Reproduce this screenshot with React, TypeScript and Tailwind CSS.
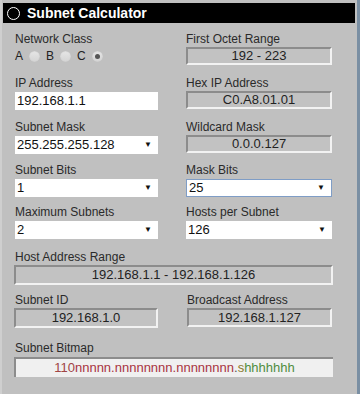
const font = { fontFamily: '"Liberation Sans", Arial, sans-serif' };

const Label: React.FC<{ text: string }> = ({ text }) => (
  <div className="text-[12px] leading-[14px] text-[#2a2a2a]">{text}</div>
);

const Output: React.FC<{ value: string; className?: string }> = ({ value, className = "" }) => (
  <div
    className={`mt-[1px] flex h-[18px] items-center justify-center border-2 border-t-[#8c8c8c] border-l-[#8c8c8c] border-r-[#f2f2f2] border-b-[#f2f2f2] bg-[#c2c2c2] text-[13px] text-[#222] ${className}`}
  >
    {value}
  </div>
);

const Select: React.FC<{ value: string; focused?: boolean }> = ({ value, focused }) => (
  <div
    className={`mt-[2px] flex h-[18px] items-center justify-between bg-white pl-[2px] pr-[6px] text-[13px] text-[#111] ${
      focused ? "border border-[#7f9dc6]" : ""
    }`}
  >
    <span>{value}</span>
    <span className="text-[8px] leading-none text-[#111]">▼</span>
  </div>
);

const Radio: React.FC<{ checked?: boolean }> = ({ checked }) => (
  <span className="mx-[6px] inline-flex h-[11px] w-[11px] items-center justify-center rounded-full bg-gradient-to-b from-[#e6e6e6] to-[#d4d4d4] shadow-[inset_0_0_1px_#aaa]">
    {checked && <span className="h-[5px] w-[5px] rounded-full bg-[#555]" />}
  </span>
);

export default function App() {
  return (
    <div style={font} className="flex h-[394px] w-[360px] overflow-hidden bg-[#c0c0c0]">
      <div className="flex-1 border-l-[2px] border-[#cfcfcf] pl-[1px] pt-[3px]">
        <div className="flex h-[20px] w-[352px] items-center bg-black pl-[4px]">
          <span className="h-[13px] w-[13px] rounded-full border-[1.5px] border-white" />
          <span className="ml-[7px] text-[14px] font-bold text-white">Subnet Calculator</span>
        </div>

        <div className="pl-[12px] pt-[9px]">
          <div className="grid grid-cols-[143px_145px] gap-x-[29px]">
            <div>
              <Label text="Network Class" />
              <div className="mt-[3px] flex h-[14px] items-center text-[12px] text-[#222]">
                A<Radio />B<Radio />C<Radio checked />
              </div>
              <div className="mt-[13px]">
                <Label text="IP Address" />
                <div className="mt-[2px] flex h-[18px] items-center bg-white pl-[2px] text-[13px] text-[#111]">
                  192.168.1.1
                </div>
              </div>
              <div className="mt-[10px]">
                <Label text="Subnet Mask" />
                <Select value="255.255.255.128" />
              </div>
              <div className="mt-[9px]">
                <Label text="Subnet Bits" />
                <Select value="1" />
              </div>
              <div className="mt-[8px]">
                <Label text="Maximum Subnets" />
                <Select value="2" />
              </div>
            </div>

            <div className="-ml-[1px]">
              <Label text="First Octet Range" />
              <Output value="192 - 223" />
              <div className="mt-[11px]">
                <Label text="Hex IP Address" />
                <Output value="C0.A8.01.01" />
              </div>
              <div className="mt-[11px]">
                <Label text="Wildcard Mask" />
                <Output value="0.0.0.127" />
              </div>
              <div className="mt-[10px]">
                <Label text="Mask Bits" />
                <Select value="25" focused />
              </div>
              <div className="mt-[8px]">
                <Label text="Hosts per Subnet" />
                <Select value="126" />
              </div>
            </div>
          </div>

          <div className="mt-[11px]">
            <Label text="Host Address Range" />
            <Output value="192.168.1.1 - 192.168.1.126" className="-ml-[1px] h-[20px] w-[319px]" />
          </div>

          <div className="mt-[8px] grid grid-cols-[143px_145px] gap-x-[29px]">
            <div>
              <Label text="Subnet ID" />
              <Output value="192.168.1.0" className="-ml-[1px] h-[20px] w-[144px]" />
            </div>
            <div>
              <Label text="Broadcast Address" />
              <Output value="192.168.1.127" className="h-[19px]" />
            </div>
          </div>

          <div className="mt-[13px]">
            <Label text="Subnet Bitmap" />
            <div className="-ml-[1px] mt-[2px] flex h-[20px] w-[319px] items-center justify-center border-l-2 border-t-2 border-[#8c8c8c] bg-[#f0f0f0] text-[13px]">
              <span className="text-[#a04545]">110</span>
              <span className="text-[#a8343f]">nnnnn.nnnnnnnn.nnnnnnnn</span>
              <span className="text-[#555]">.</span>
              <span className="text-[#8c7a2c]">s</span>
              <span className="text-[#4f8c3e]">hhhhhhh</span>
            </div>
          </div>
        </div>
      </div>
      <div className="w-[3px] bg-[#7a8fa3]" />
    </div>
  );
}
